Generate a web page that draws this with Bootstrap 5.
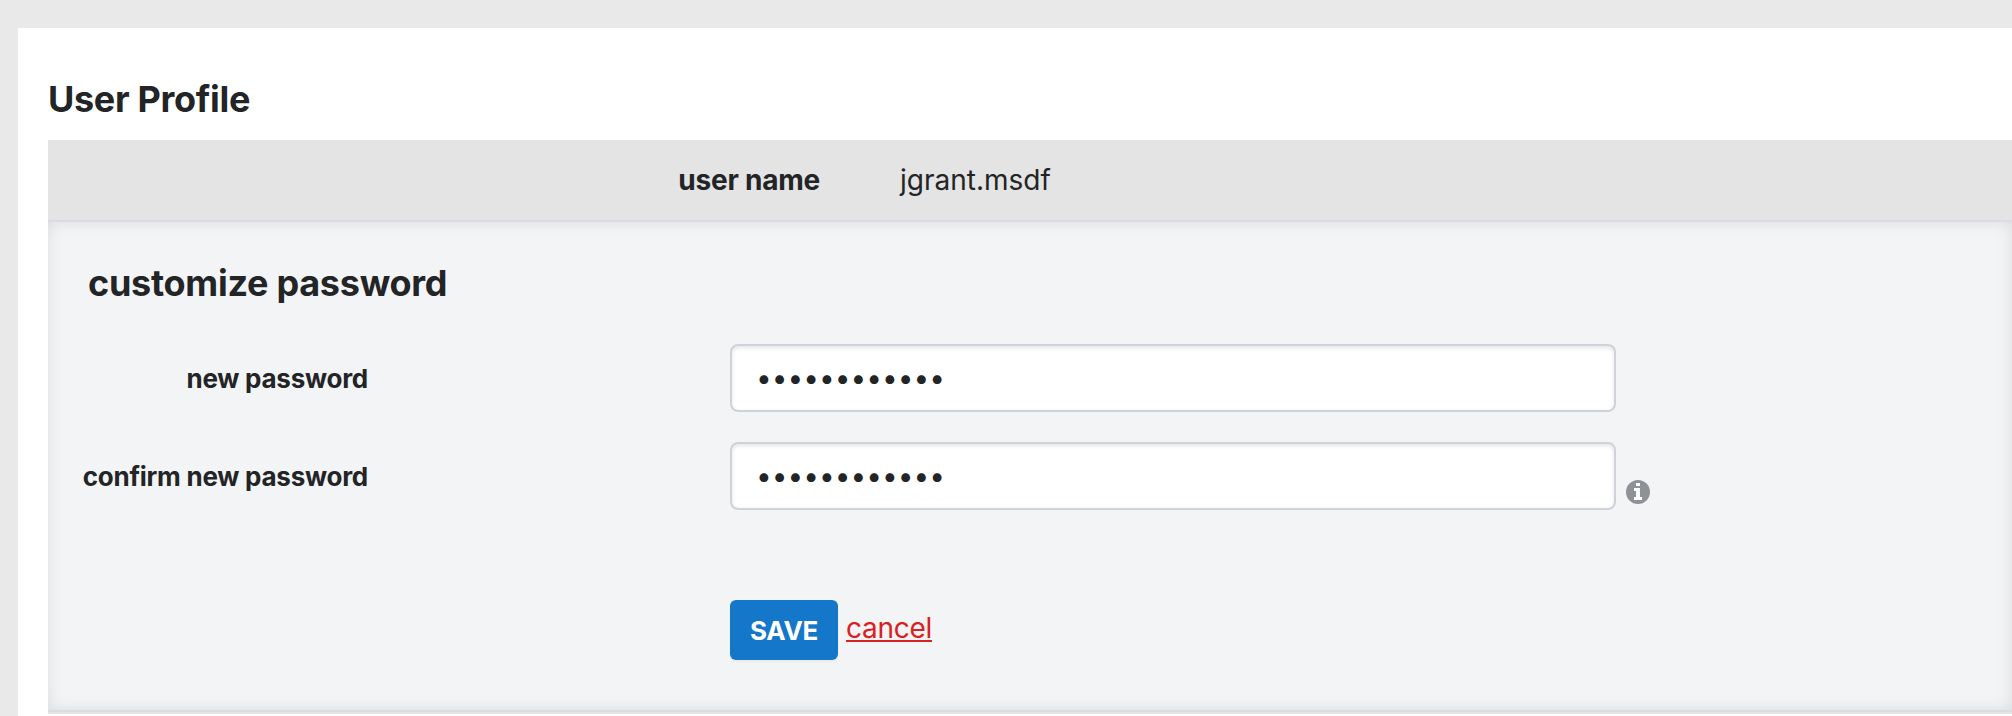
<!DOCTYPE html>
<html lang="en">
<head>
<meta charset="utf-8">
<title>User Profile</title>
<link href="https://cdn.jsdelivr.net/npm/bootstrap@5.3.0/dist/css/bootstrap.min.css" rel="stylesheet">
<style>
body{background:#e9e9e9;color:#222426;font-family:Inter,"Liberation Sans",sans-serif;font-size:28px;line-height:40px;height:716px;overflow:hidden;padding:28px 0 0 18px}
.sheet{background:#fff;height:688px;padding:47px 0 0 30px}
h1,h2{font-size:36px;line-height:48px;font-weight:700;letter-spacing:-.0075em;margin:0}
h1{margin-bottom:17px;letter-spacing:-.009em}
.user-row{background:#e4e4e4;height:80px}
.user-key{width:772px;letter-spacing:-.008em}
.user-value{margin-left:80px}
.edit-panel{height:492px;background:#f3f4f6;border-top:2px solid #dadce1;border-bottom:2px solid #d9dce0;box-shadow:inset 0 0 16px rgba(0,0,0,.1);padding:37px 0 0}
.edit-panel h2{padding-left:40px;margin-bottom:37px}
.field-row{height:68px;margin-bottom:30px}
.field-label{width:320px;margin-right:362px;padding-top:2px;font-size:26px;font-weight:700;letter-spacing:-.0095em}
.field-row .form-control{width:886px;height:68px;border:2px solid #d0d2d9;border-radius:8px;padding:0 24px;font-family:Inter,sans-serif;font-size:28px;color:#222426;box-shadow:inset 0 2px 4px rgba(0,0,0,.1)}
.info-icon{width:24px;height:24px;margin:32px 0 0 10px}
.action-row{margin:90px 0 0 682px}
.btn-save{--bs-btn-bg:#1477c9;--bs-btn-color:#fff;--bs-btn-border-width:0;width:108px;height:60px;border-radius:6px;padding:0;font-size:26px;font-weight:700;letter-spacing:-.01em;box-shadow:0 2px 2px rgba(0,0,0,.04)}
.cancel-link{color:#d92121;margin-left:8px;padding-bottom:4px;letter-spacing:-.01em}
.panel-foot{height:2px;background:#e4e4e4}
</style>
</head>
<body>
<main class="sheet">
  <h1>User Profile</h1>
  <div class="user-row d-flex align-items-center">
    <div class="user-key text-end fw-bold">user name</div>
    <div class="user-value">jgrant.msdf</div>
  </div>
  <form class="edit-panel">
    <h2>customize password</h2>
    <div class="field-row d-flex align-items-center">
      <label class="field-label text-end" for="np">new password</label>
      <input class="form-control" type="password" id="np" value="abcdefghijkl">
    </div>
    <div class="field-row d-flex align-items-center">
      <label class="field-label text-end" for="cp">confirm new password</label>
      <input class="form-control" type="password" id="cp" value="abcdefghijkl">
      <svg class="info-icon flex-shrink-0" viewBox="0 0 24 24"><circle cx="12" cy="12" r="12" fill="#8e9297"/><path fill="#fff" d="M10 3h4v3h-4zM8 8h6v9h2v3H8v-3h2v-6H8z"/></svg>
    </div>
    <div class="action-row d-flex align-items-center">
      <button type="button" class="btn btn-save">SAVE</button>
      <a href="#" class="cancel-link">cancel</a>
    </div>
  </form>
  <div class="panel-foot"></div>
</main>
<script src="https://cdn.jsdelivr.net/npm/bootstrap@5.3.0/dist/js/bootstrap.bundle.min.js"></script>
</body>
</html>
